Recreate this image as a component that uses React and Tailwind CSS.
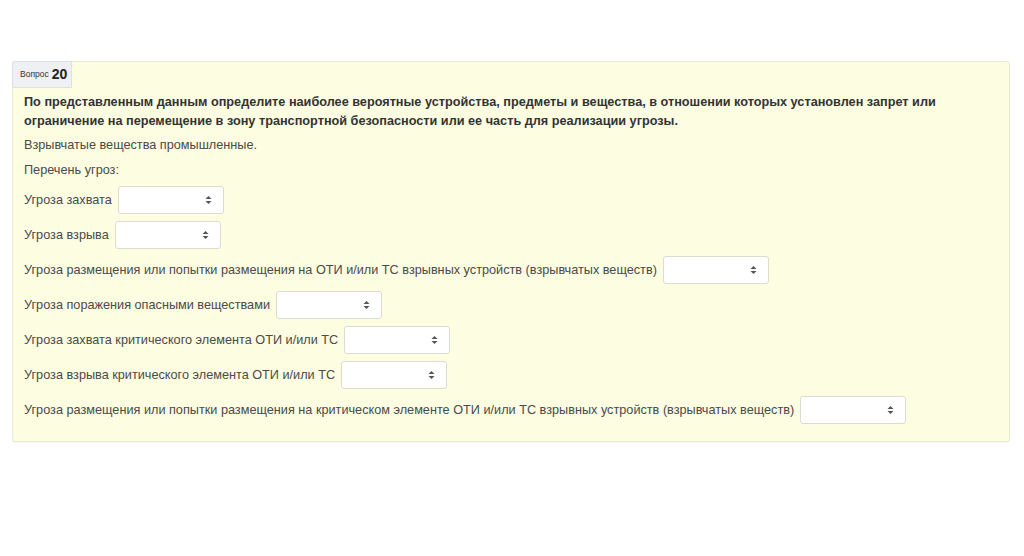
import React from "react";

const rows = [
  "Угроза захвата",
  "Угроза взрыва",
  "Угроза размещения или попытки размещения на ОТИ и/или ТС взрывных устройств (взрывчатых веществ)",
  "Угроза поражения опасными веществами",
  "Угроза захвата критического элемента ОТИ и/или ТС",
  "Угроза взрыва критического элемента ОТИ и/или ТС",
  "Угроза размещения или попытки размещения на критическом элементе ОТИ и/или ТС взрывных устройств (взрывчатых веществ)",
];

function Select() {
  return (
    <div className="ml-[6px] flex h-[28px] w-[106px] items-center justify-end rounded-[3px] border border-[#dcdcd0] bg-white pr-[11px]">
      <svg width="7" height="10" viewBox="0 0 7 10">
        <path d="M3.5 1 L6.5 4 L0.5 4 Z" fill="#555" />
        <path d="M3.5 9 L6.5 6 L0.5 6 Z" fill="#555" />
      </svg>
    </div>
  );
}

export default function App() {
  return (
    <div
      className="h-[556px] w-[1024px] bg-white pt-[61px] pl-[12px] text-[12.7px] text-[#4a4a4a]"
      style={{ fontFamily: '"Liberation Sans", Arial, sans-serif' }}
    >
      <div className="relative h-[381px] w-[998px] rounded-[3px] border border-[#ebebd3] bg-[#fdfde2] shadow-[0_1px_1px_rgba(0,0,0,0.04)]">
        <div className="absolute left-[-1px] top-[-1px] flex h-[27px] w-[60px] items-center rounded-tl-[3px] border border-[#dde0e4] bg-[#eef0f3] pl-[7px]">
          <span className="text-[8.5px] text-[#333]">Вопрос</span>
          <span className="ml-[3px] text-[14px] font-bold text-[#222]">20</span>
        </div>
        <div className="pl-[11px] pt-[31px]">
          <p className="w-[960px] font-bold leading-[19px] text-[#333]">
            По представленным данным определите наиболее вероятные устройства, предметы и вещества, в отношении которых установлен запрет или ограничение на перемещение в зону транспортной безопасности или ее часть для реализации угрозы.
          </p>
          <p className="mt-[5px] leading-[19px]">Взрывчатые вещества промышленные.</p>
          <p className="mt-[6px] leading-[19px]">Перечень угроз:</p>
          <div className="mt-[6px] flex flex-col gap-[7px]">
            {rows.map((r, i) => (
              <div key={i} className="flex items-center">
                <span className="leading-[19px]">{r}</span>
                <Select />
              </div>
            ))}
          </div>
        </div>
      </div>
    </div>
  );
}
